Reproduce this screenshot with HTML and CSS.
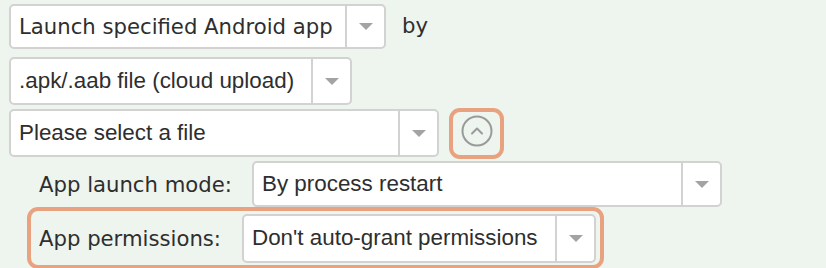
FILE: index.html
```html
<!DOCTYPE html>
<html lang="en">
<head>
  <meta charset="UTF-8" />
  <title>Launch app step</title>
  <link rel="stylesheet" href="styles.css">
</head>
<body>

  <div class="step">
    <div class="row row-first">
      <div class="select select-action">
        <span class="value wide">Launch specified Android app</span>
        <span class="caret"></span>
      </div>
      <span class="word wide">by</span>
    </div>

    <div class="row row-source">
      <div class="select select-source">
        <span class="value">.apk/.aab file (cloud upload)</span>
        <span class="caret"></span>
      </div>
    </div>

    <div class="row row-file">
      <div class="select select-file">
        <span class="value">Please select a file</span>
        <span class="caret"></span>
      </div>
      <button class="toggle highlight" title="Collapse">
        <svg width="32" height="32" viewBox="0 0 32 32">
          <circle cx="16" cy="16" r="14.5" fill="none" stroke="#9a9a9a" stroke-width="2"/>
          <polyline points="11,18.5 16,13.5 21,18.5" fill="none" stroke="#9a9a9a" stroke-width="2" stroke-linecap="round" stroke-linejoin="round"/>
        </svg>
      </button>
    </div>

    <div class="option option-mode">
      <label class="label wide">App launch mode:</label>
      <div class="select select-mode">
        <span class="value">By process restart</span>
        <span class="caret"></span>
      </div>
    </div>

    <div class="option option-perm highlight">
      <label class="label wide">App permissions:</label>
      <div class="select select-perm">
        <span class="value">Don't auto-grant permissions</span>
        <span class="caret"></span>
      </div>
    </div>
  </div>

</body>
</html>
```

FILE: styles.css
```css
:root {
  --bg-color: #eef4ee;
  --border-color: #d2d2d2;
  --text-color: #2e2e2e;
  --caret-color: #a3a3a3;
  --mark-color: #e8a27f;
}

* {
  margin: 0;
  padding: 0;
  box-sizing: border-box;
}

body {
  font-family: 'Liberation Sans', Arial, sans-serif;
  font-size: 22.4px;
  background: var(--bg-color);
  color: var(--text-color);
  width: 826px;
  height: 268px;
  overflow: hidden;
}

.wide {
  font-family: 'DejaVu Sans', Verdana, sans-serif;
  font-size: 21.2px;
}

.step {
  padding: 4px 0 0 9px;
  display: flex;
  flex-direction: column;
}

.row {
  display: flex;
  align-items: center;
}

.row-first {
  height: 45px;
  margin-bottom: 8px;
}

.row-source {
  height: 48px;
  margin-bottom: 3px;
}

.row-file {
  height: 50px;
  margin-bottom: 3px;
}

/* fake select box */
.select {
  display: flex;
  align-items: stretch;
  height: 100%;
  background: #fff;
  border: 2px solid var(--border-color);
  border-radius: 5px;
}

.select .value {
  flex: 1;
  display: flex;
  align-items: center;
  padding-left: 8px;
  white-space: nowrap;
}

.select .caret {
  width: 39px;
  border-left: 2px solid var(--border-color);
  display: flex;
  align-items: center;
  justify-content: center;
}

.select .caret::after {
  content: '';
  border-left: 7px solid transparent;
  border-right: 7px solid transparent;
  border-top: 7px solid var(--caret-color);
}

.select-action { width: 377px; }
.select-source { width: 343px; }
.select-file { width: 430px; height: 48px; }
.select-mode { width: 470px; height: 46px; }
.select-perm { width: 354px; height: 49px; }

.word {
  margin-left: 16px;
  padding-bottom: 2px;
}

.highlight {
  border: 4px solid var(--mark-color);
  border-radius: 11px;
}

.toggle {
  margin-left: 10px;
  width: 55px;
  height: 51px;
  background: transparent;
  display: flex;
  align-items: center;
  justify-content: center;
  padding-bottom: 4px;
}

.option {
  display: flex;
  align-items: center;
}

.option .label {
  white-space: nowrap;
}

.option-mode {
  margin-left: 30px;
  height: 46px;
}

.option-mode .label {
  width: 213px;
}

.option-perm {
  margin-left: 18px;
  width: 577px;
  height: 62px;
  padding-left: 8px;
}

.option-perm .label {
  width: 203px;
}
```
